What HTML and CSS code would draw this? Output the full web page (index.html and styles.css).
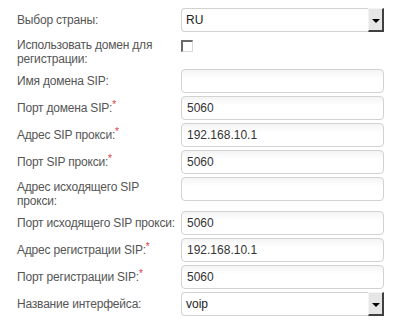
FILE: index.html
```html
<!DOCTYPE html>
<html lang="ru">
<head>
    <meta charset="UTF-8">
    <title>SIP</title>
    <link rel="stylesheet" href="styles.css">
</head>
<body>
    <div class="form">
        <div class="row">
            <div class="label">Выбор страны:</div>
            <div class="select">
                <span class="select-value">RU</span>
                <span class="select-btn"><span class="arrow"></span></span>
            </div>
        </div>
        <div class="row tall">
            <div class="label">Использовать домен для регистрации:</div>
            <span class="checkbox"></span>
        </div>
        <div class="row">
            <div class="label">Имя домена SIP:</div>
            <input type="text" value="">
        </div>
        <div class="row">
            <div class="label">Порт домена SIP:<sup class="req">*</sup></div>
            <input type="text" value="5060">
        </div>
        <div class="row">
            <div class="label">Адрес SIP прокси:<sup class="req">*</sup></div>
            <input type="text" value="192.168.10.1">
        </div>
        <div class="row">
            <div class="label">Порт SIP прокси:<sup class="req">*</sup></div>
            <input type="text" value="5060">
        </div>
        <div class="row tall">
            <div class="label">Адрес исходящего SIP прокси:</div>
            <input type="text" value="">
        </div>
        <div class="row">
            <div class="label">Порт исходящего SIP прокси:</div>
            <input type="text" value="5060">
        </div>
        <div class="row">
            <div class="label">Адрес регистрации SIP:<sup class="req">*</sup></div>
            <input type="text" value="192.168.10.1">
        </div>
        <div class="row">
            <div class="label">Порт регистрации SIP:<sup class="req">*</sup></div>
            <input type="text" value="5060">
        </div>
        <div class="row">
            <div class="label">Название интерфейса:</div>
            <div class="select">
                <span class="select-value">voip</span>
                <span class="select-btn"><span class="arrow"></span></span>
            </div>
        </div>
    </div>
</body>
</html>
```

FILE: styles.css
```css
body {
    margin: 0;
    background: #fff;
    font-family: "Liberation Sans", Arial, sans-serif;
    font-size: 12px;
    color: #555;
}
.form {
    padding: 8px 0 0 17px;
}
.row {
    display: flex;
    align-items: center;
    margin-bottom: 3px;
}
.row.tall {
    align-items: flex-start;
    margin-bottom: 0;
}
.label {
    width: 163px;
    margin-right: 1px;
    line-height: 14px;
    letter-spacing: -0.2px;
}
.row.tall .label {
    padding: 3px 0;
}
.req {
    color: #e03a3a;
    font-size: 10px;
    line-height: 0;
    vertical-align: 4px;
}
input {
    width: 203px;
    height: 24px;
    box-sizing: border-box;
    margin: 0;
    padding: 0 5px;
    border: 1px solid #d2d2d2;
    border-radius: 4px;
    background: linear-gradient(#f4f4f4, #fff 40%);
    font-family: "Liberation Sans", Arial, sans-serif;
    font-size: 12px;
    color: #333;
}
.select {
    display: flex;
    width: 203px;
    height: 24px;
    box-sizing: border-box;
    border: 1px solid #d2d2d2;
    border-radius: 4px 0 0 4px;
    border-right: none;
    background: #fff;
}
.select-value {
    flex: 1;
    padding-left: 4px;
    line-height: 22px;
    color: #222;
}
.select-btn {
    display: flex;
    align-items: center;
    justify-content: center;
    width: 16px;
    margin-top: -1px;
    margin-bottom: -1px;
    box-sizing: border-box;
    background: #e6e6e6;
    border-top: 1px solid #f4f4f4;
    border-left: 1px solid #f4f4f4;
    border-right: 2px solid #404040;
    border-bottom: 2px solid #404040;
}
.arrow {
    width: 0;
    height: 0;
    border-left: 4px solid transparent;
    border-right: 4px solid transparent;
    border-top: 4px solid #000;
    margin-top: 2px;
}
.checkbox {
    width: 12px;
    height: 12px;
    box-sizing: border-box;
    margin-top: 5px;
    border-top: 2px solid #6a6a6a;
    border-left: 2px solid #6a6a6a;
    border-right: 1px solid #d8d8d8;
    border-bottom: 1px solid #d8d8d8;
    background: #fff;
}
```
